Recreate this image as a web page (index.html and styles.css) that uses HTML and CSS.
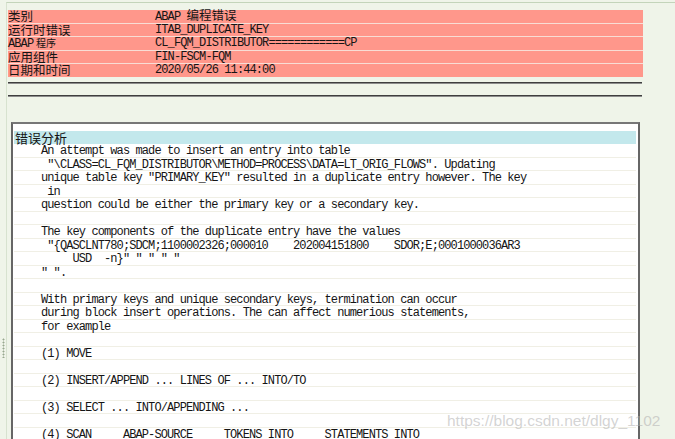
FILE: index.html
```html
<!DOCTYPE html>
<html lang="zh">
<head>
<meta charset="utf-8">
<title>ABAP 运行时错误</title>
<link rel="stylesheet" href="styles.css">
</head>
<body>
<div class="page">
  <div class="summary">
    <div class="srow"><span class="label">类别</span><span class="value mono">ABAP <span class="cjk">编程错误</span></span></div>
    <div class="srow"><span class="label">运行时错误</span><span class="value mono">ITAB_DUPLICATE_KEY</span></div>
    <div class="srow"><span class="label"><span class="mono">ABAP</span> <span class="small-cjk">程序</span></span><span class="value mono">CL_FQM_DISTRIBUTOR============CP</span></div>
    <div class="srow"><span class="label">应用组件</span><span class="value mono">FIN-FSCM-FQM</span></div>
    <div class="srow"><span class="label">日期和时间</span><span class="value mono">2020/05/26 11:44:00</span></div>
  </div>
  <div class="rule"></div>
  <div class="rule rule-second"></div>
  <div class="panel">
    <div class="panel-head">错误分析</div>
    <div class="line mono">An attempt was made to insert an entry into table</div>
    <div class="line mono"> "\CLASS=CL_FQM_DISTRIBUTOR\METHOD=PROCESS\DATA=LT_ORIG_FLOWS". Updating</div>
    <div class="line mono">unique table key "PRIMARY_KEY" resulted in a duplicate entry however. The key</div>
    <div class="line mono"> in</div>
    <div class="line mono">question could be either the primary key or a secondary key.</div>
    <div class="line mono"></div>
    <div class="line mono">The key components of the duplicate entry have the values</div>
    <div class="line mono"> "{QASCLNT780;SDCM;1100002326;000010    202004151800    SDOR;E;0001000036AR3</div>
    <div class="line mono">     USD  -n}" " " " "</div>
    <div class="line mono">" ".</div>
    <div class="line mono"></div>
    <div class="line mono">With primary keys and unique secondary keys, termination can occur</div>
    <div class="line mono">during block insert operations. The can affect numerious statements,</div>
    <div class="line mono">for example</div>
    <div class="line mono"></div>
    <div class="line mono">(1) MOVE</div>
    <div class="line mono"></div>
    <div class="line mono">(2) INSERT/APPEND ... LINES OF ... INTO/TO</div>
    <div class="line mono"></div>
    <div class="line mono">(3) SELECT ... INTO/APPENDING ...</div>
    <div class="line mono"></div>
    <div class="line mono">(4) SCAN     ABAP-SOURCE     TOKENS INTO     STATEMENTS INTO</div>
    <div class="line mono"></div>
    <div class="line mono"></div>
  </div>
</div>
<div class="grip"></div>
<div class="watermark">https://blog.csdn.net/dlgy_1102</div>
</body>
</html>
```
FILE: styles.css
```css
html, body {
  margin: 0;
  height: 100%;
  overflow: hidden;
}

body {
  background: #eff4e9;
  color: #151515;
  font-family: "Noto Sans CJK SC", "Noto Sans", sans-serif;
  position: relative;
}

.page {
  margin: 2px 0 0 6px;
  border-top: 1px solid #c3d4ba;
  border-left: 1px solid #d7e2cf;
  padding: 7px 32px 0 1px;
}

.mono {
  font-family: "Liberation Mono", "Noto Sans CJK SC", monospace;
  font-size: 12px;
  letter-spacing: -0.9px;
  white-space: pre;
}

.cjk {
  font-family: "Noto Sans CJK SC", sans-serif;
  font-size: 12.5px;
  letter-spacing: 0;
}

.small-cjk {
  font-family: "Noto Sans CJK SC", sans-serif;
  font-size: 10px;
}

.summary {
  display: flex;
  flex-direction: column;
  gap: 1px;
  background: #f8ddd5;
}

.srow {
  display: flex;
  align-items: center;
  height: 12.5px;
  line-height: 12.5px;
  background: #ff978b;
}

.label {
  width: 147px;
  flex: none;
  font-size: 12.5px;
  white-space: nowrap;
}

.value {
  flex: 1;
}

.rule {
  margin: 5.5px 1px 0 0;
  height: 0;
  border-top: 1px solid #3f3f3f;
  border-bottom: 1px solid #8c8c8c;
}

.rule-second {
  margin-top: 11px;
}

.panel {
  margin: 25px 3px 0 3px;
  border: 2px solid #666666;
  border-top-color: #777777;
  border-bottom: none;
  background: #ffffff;
  padding: 7px 2px 0 1px;
}

.panel-head {
  height: 13px;
  line-height: 13px;
  background: #c3e8ec;
  font-size: 13px;
  padding-left: 1px;
}

.line {
  height: 11.5px;
  padding-top: 1px;
  line-height: 12.5px;
  border-bottom: 1px solid #f0efe5;
  padding-left: 27px;
}

.grip {
  position: absolute;
  left: 2px;
  top: 338px;
  width: 3px;
  height: 20px;
  background-image: radial-gradient(circle, #98a88f 0.9px, transparent 1.1px);
  background-size: 3px 3px;
}

.watermark {
  position: absolute;
  left: 447px;
  top: 412px;
  font-family: "Liberation Sans", Arial, sans-serif;
  font-size: 15.5px;
  color: rgba(175, 175, 175, 0.55);
  white-space: nowrap;
}
```
